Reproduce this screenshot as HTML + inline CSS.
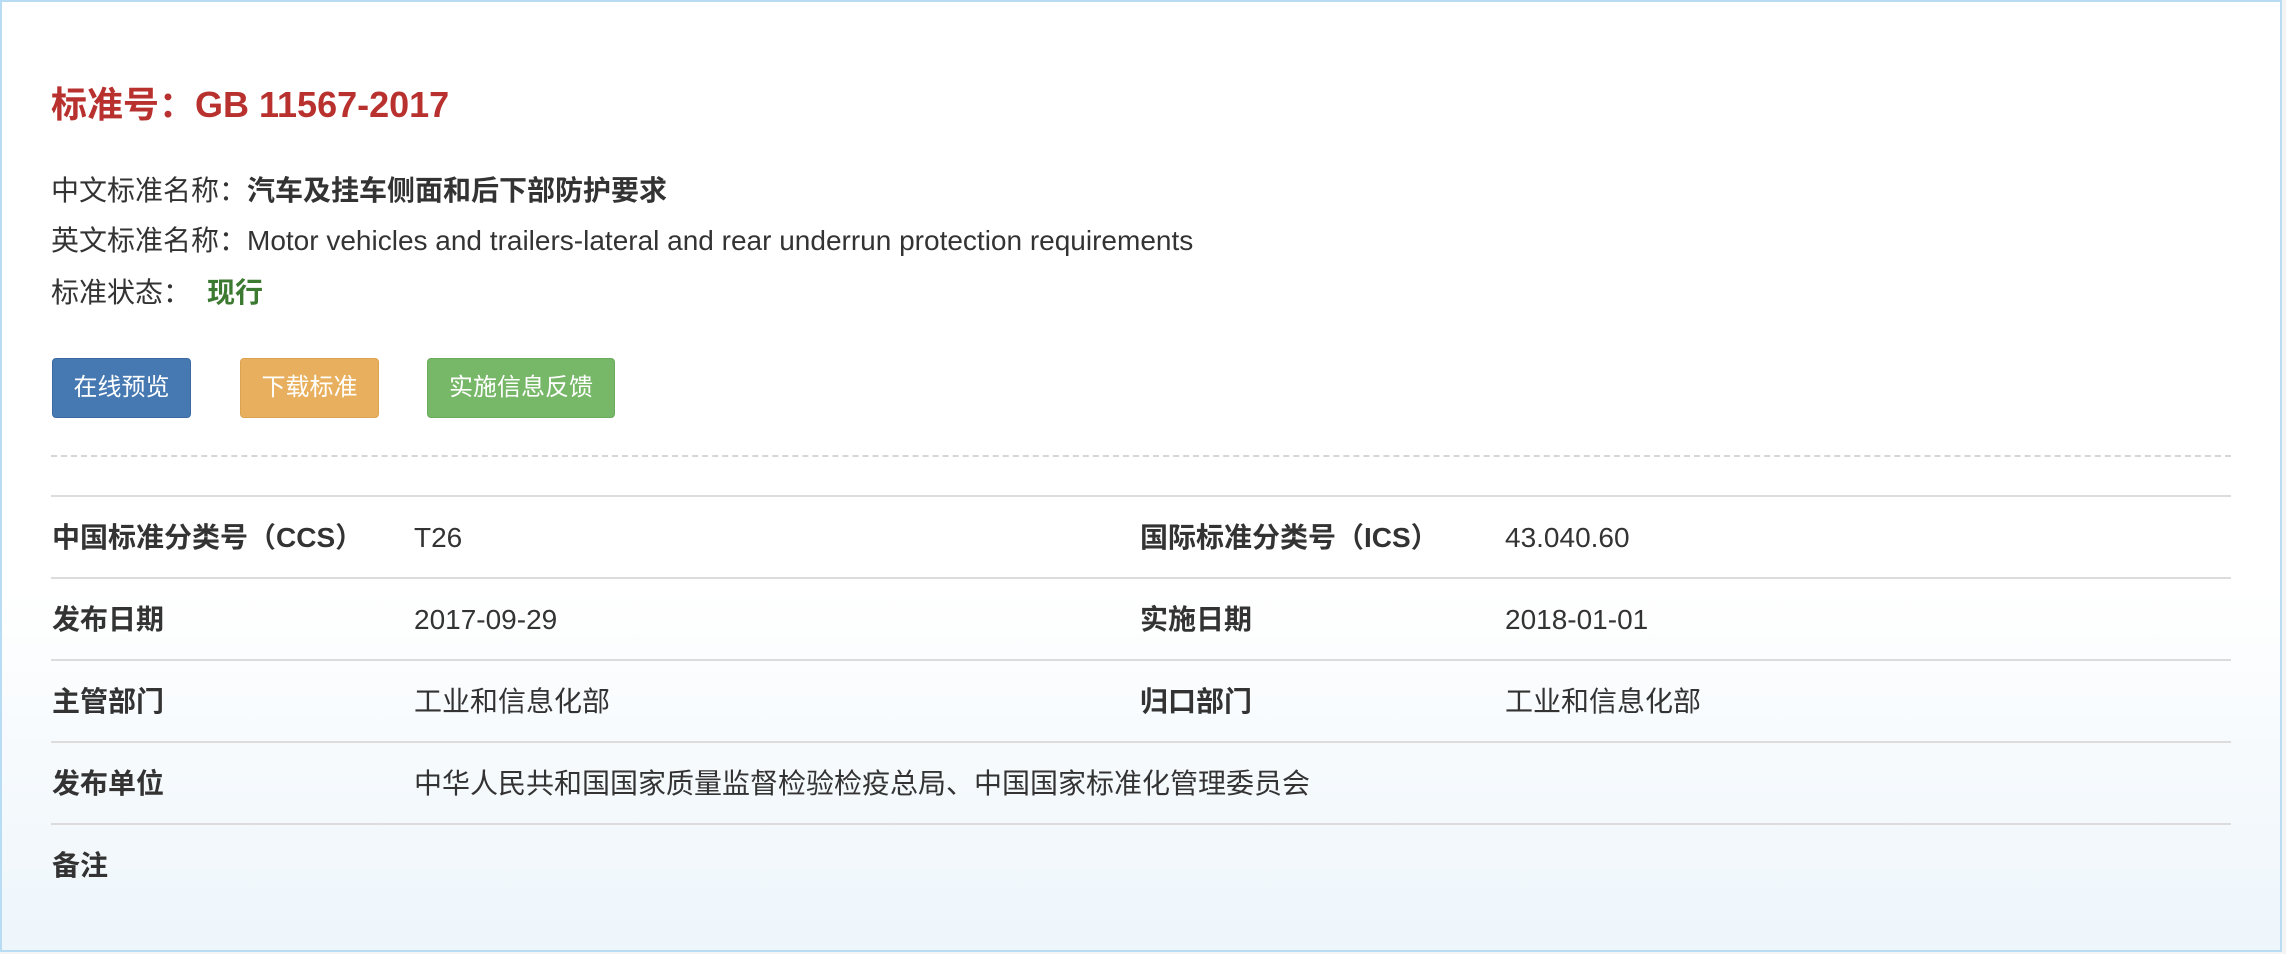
<!DOCTYPE html>
<html><head><meta charset="utf-8"><style>
html,body{margin:0;padding:0;background:#f4f4f4;width:2286px;height:954px;overflow:hidden}
body{font-family:"Liberation Sans","Noto Sans CJK SC",sans-serif;color:#333}
.box{position:absolute;left:0;top:0;width:2278px;height:948px;border:2px solid #b8dcf3;background:linear-gradient(to bottom,#fff 0,#fff 62%,#f6fafd 80%,#eef6fb 100%)}
.t{position:absolute;white-space:nowrap}
.title{left:51px;top:83px;font-size:36px;font-weight:bold;color:#b8312f;line-height:44px}
.l{font-size:28px;line-height:34px;left:51px}
.btn{position:absolute;top:358px;height:58px;border-radius:4px;color:#fff;font-size:24px;line-height:58px;text-align:center}
.dash{position:absolute;left:51px;width:2180px;top:455px;border-top:2px dashed #d6d6d6}
.hl{position:absolute;left:51px;width:2180px;height:2px;background:#dcdcdc}
.c{position:absolute;font-size:28px;line-height:34px;white-space:nowrap}
.b{font-weight:bold}
</style></head><body><div class="box"></div>
<div class="t title">标准号：GB 11567-2017</div>
<div class="t l" style="top:174px">中文标准名称：<b>汽车及挂车侧面和后下部防护要求</b></div>
<div class="t l" style="top:224px">英文标准名称：Motor vehicles and trailers-lateral and rear underrun protection requirements</div>
<div class="t l" style="top:276px">标准状态：<b style="color:#3c7a32;margin-left:16px">现行</b></div>
<div class="btn" style="left:52px;width:137px;background:#4679b2;border:1px solid #3c6aa0">在线预览</div>
<div class="btn" style="left:240px;width:137px;background:#e8b05e;border:1px solid #dca350">下载标准</div>
<div class="btn" style="left:427px;width:186px;background:#77b768;border:1px solid #6aab5c">实施信息反馈</div>
<div class="dash"></div>
<div class="hl" style="top:495px"></div>
<div class="hl" style="top:577px"></div>
<div class="hl" style="top:659px"></div>
<div class="hl" style="top:741px"></div>
<div class="hl" style="top:823px"></div>
<div class="c b" style="left:52px;top:521px">中国标准分类号（CCS）</div>
<div class="c" style="left:414px;top:521px">T26</div>
<div class="c b" style="left:1140px;top:521px">国际标准分类号（ICS）</div>
<div class="c" style="left:1505px;top:521px">43.040.60</div>
<div class="c b" style="left:52px;top:603px">发布日期</div>
<div class="c" style="left:414px;top:603px">2017-09-29</div>
<div class="c b" style="left:1140px;top:603px">实施日期</div>
<div class="c" style="left:1505px;top:603px">2018-01-01</div>
<div class="c b" style="left:52px;top:685px">主管部门</div>
<div class="c" style="left:414px;top:685px">工业和信息化部</div>
<div class="c b" style="left:1140px;top:685px">归口部门</div>
<div class="c" style="left:1505px;top:685px">工业和信息化部</div>
<div class="c b" style="left:52px;top:767px">发布单位</div>
<div class="c" style="left:414px;top:767px">中华人民共和国国家质量监督检验检疫总局、中国国家标准化管理委员会</div>
<div class="c b" style="left:52px;top:849px">备注</div>
</body></html>
